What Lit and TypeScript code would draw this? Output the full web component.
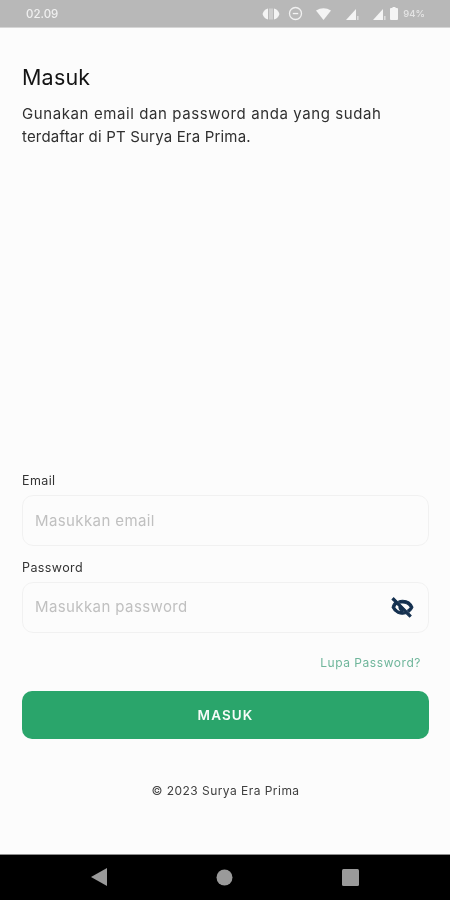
import { html, css, LitElement, svg } from 'lit';
import { customElement } from 'lit/decorators.js';

@customElement('app-root')
export class AppRoot extends LitElement {
  static styles = css`
    :host {
      display: flex;
      flex-direction: column;
      width: 450px;
      height: 900px;
      background: #fcfcfc;
      font-family: Inter, 'Open Sans', sans-serif;
      color: #1c1c1c;
      overflow: hidden;
    }

    .status {
      height: 28px;
      flex: none;
      box-sizing: border-box;
      display: flex;
      align-items: center;
      padding: 0 25px 0 26px;
      background: #b8b8b8;
      border-bottom: 1px solid #d6d6d6;
      color: #f0f0f0;
      font-size: 11.5px;
      font-weight: 500;
      filter: blur(0.4px);
    }

    .status-icons {
      margin-left: auto;
      display: flex;
      align-items: center;
    }

    .status-icons svg {
      display: block;
      fill: #f4f4f4;
    }

    .battery-text {
      font-size: 9.5px;
      margin-left: 5px;
      opacity: 0.8;
    }

    main {
      flex: 1;
      display: flex;
      flex-direction: column;
      padding: 0 21px 0 22px;
      filter: blur(0.3px);
    }

    h1 {
      margin: 35px 0 0;
      font-size: 21.5px;
      line-height: 28px;
      font-weight: 400;
      color: #141414;
      letter-spacing: 0.2px;
    }

    .intro {
      margin: 11px 0 0;
      font-size: 15px;
      line-height: 23px;
      font-weight: 400;
      color: #303030;
      letter-spacing: 0.6px;
    }

    .intro .second {
      letter-spacing: 0.18px;
    }

    form {
      margin-top: auto;
      display: flex;
      flex-direction: column;
    }

    label {
      font-size: 12.5px;
      line-height: 16px;
      color: #333;
      margin-bottom: 6px;
      letter-spacing: 0.4px;
    }

    .field {
      height: 51px;
      box-sizing: border-box;
      display: flex;
      align-items: center;
      padding: 0 12px 0 12px;
      border: 1px solid #f1f1f1;
      border-radius: 11px;
      background: #fcfcfc;
      margin-bottom: 14px;
    }

    .field.with-icon {
      padding-bottom: 2px;
    }

    input {
      flex: 1;
      min-width: 0;
      border: 0;
      outline: 0;
      padding: 0;
      background: transparent;
      font-family: inherit;
      font-size: 15px;
      letter-spacing: 0.4px;
    }

    input::placeholder {
      color: #c0c0c0;
      opacity: 1;
    }

    .eye {
      display: block;
      flex: none;
    }

    .forgot {
      align-self: flex-end;
      margin: 8px 8px 0 0;
      font-size: 12px;
      line-height: 16px;
      color: #6fb69b;
      text-decoration: none;
      letter-spacing: 0.55px;
    }

    button {
      margin-top: 20px;
      height: 48px;
      border: 0;
      border-radius: 10px;
      background: #2aa56b;
      color: #f6fbf8;
      font-family: inherit;
      font-size: 13.5px;
      font-weight: 600;
      letter-spacing: 1.1px;
    }

    .copy {
      margin: 44px 0 55px;
      text-align: center;
      font-size: 12px;
      line-height: 16px;
      color: #404040;
      letter-spacing: 0.46px;
    }

    .nav {
      height: 46px;
      flex: none;
      box-sizing: border-box;
      border-top: 1px solid #8f8f8f;
      background: #000;
      display: flex;
      align-items: center;
      justify-content: center;
      gap: 109px;
      padding-bottom: 1px;
    }

    .nav svg {
      display: block;
      fill: #9a9a9a;
    }
  `;

  private statusIcons() {
    return html`<div class="status-icons">
      <svg width="18" height="14" viewBox="0 0 18 14" style="margin-right:8px">
        <path d="M6 1.500a5.600 5.600 0 0 0 0 11zM12 1.500a5.600 5.600 0 0 1 0 11z" />
        <path d="M2 4 .5 7 2 10zM16 4l1.500 3L16 10z" />
        <rect x="7" y="1.500" width="4" height="11" fill="#cfcfcf" />
      </svg>
      <svg width="15" height="15" viewBox="0 0 15 15" style="margin-right:13px">
        <circle cx="7.500" cy="7.500" r="6" fill="none" stroke="#f0f0f0" stroke-width="1.300" />
        <rect x="4.800" y="6.900" width="5.400" height="1.300" />
      </svg>
      <svg width="15" height="12" viewBox="0 0 15 12" style="margin-right:15px">
        <path d="M0 2.500Q7.500-2 15 2.500L7.500 12z" />
      </svg>
      <svg width="14" height="12" viewBox="0 0 14 12" style="margin-right:13px">
        <path d="M0 12 10 1v11z" />
        <rect x="11" y="8" width="1.600" height="4" opacity=".6" />
      </svg>
      <svg width="14" height="12" viewBox="0 0 14 12" style="margin-right:3px">
        <path d="M0 12 10 1v11z" />
        <rect x="11" y="8" width="1.600" height="4" opacity=".6" />
      </svg>
      <svg width="8" height="13" viewBox="0 0 8 13">
        <rect y="1" width="8" height="12" rx="1" />
        <rect x="2.500" width="3" height="1" />
      </svg>
      <span class="battery-text">94%</span>
    </div>`;
  }

  private eyeOff() {
    return svg`<svg class="eye" width="27" height="27" viewBox="0 0 24 24" fill="#14304f" stroke="#14304f" stroke-width="0.9">
      <path d="M12 6.500a9.900 9.900 0 0 1 9.300 6.200 10 10 0 0 1-3.300 4.200l-1.600-1.600a7.600 7.600 0 0 0 2.600-2.600A7.700 7.700 0 0 0 12 8.800c-.6 0-1.200.1-1.800.2L8.400 7.200A10.400 10.400 0 0 1 12 6.500z" />
      <path d="M4.100 4.300 2.700 5.700l2.500 2.500a10 10 0 0 0-2.500 4.500A9.900 9.900 0 0 0 15.200 18.300l3.100 3.100 1.400-1.400zM12 16.700a7.700 7.700 0 0 1-7-4 7.600 7.600 0 0 1 1.900-2.800l2 2a3.100 3.100 0 0 0 3.900 3.900l1.100 1.100c-.6.200-1.300.3-1.900.3z" />
    </svg>`;
  }

  render() {
    return html`
      <div class="status">
        <span>02.09</span>
        ${this.statusIcons()}
      </div>
      <main>
        <h1>Masuk</h1>
        <p class="intro">Gunakan email dan password anda yang sudah<br /><span class="second">terdaftar di PT Surya Era Prima.</span></p>
        <form>
          <label>Email</label>
          <div class="field"><input placeholder="Masukkan email" /></div>
          <label>Password</label>
          <div class="field with-icon">
            <input placeholder="Masukkan password" />
            ${this.eyeOff()}
          </div>
          <a class="forgot" href="#">Lupa Password?</a>
          <button type="button">MASUK</button>
          <div class="copy">© 2023 Surya Era Prima</div>
        </form>
      </main>
      <div class="nav">
        <svg width="16" height="18" viewBox="0 0 16 18"><path d="M16 0v18L0 9z" /></svg>
        <svg width="17" height="17" viewBox="0 0 17 17"><circle cx="8.500" cy="8.500" r="8" /></svg>
        <svg width="17" height="17" viewBox="0 0 17 17"><rect width="17" height="17" rx="1.500" /></svg>
      </div>
    `;
  }
}
